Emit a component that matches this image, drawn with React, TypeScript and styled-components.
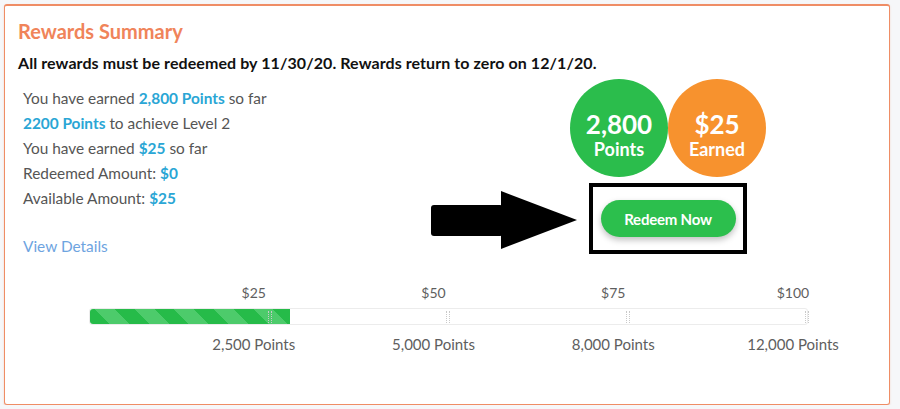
import React from "react";
import styled, { createGlobalStyle } from "styled-components";

const GlobalStyle = createGlobalStyle`
  html, body { margin: 0; padding: 0; }
  body {
    background: #f6f7f9;
    font-family: Lato, "Open Sans", "Liberation Sans", sans-serif;
  }
  * { box-sizing: border-box; }
`;

const Card = styled.section`
  margin: 4px 0 0 4px;
  width: 886px;
  height: 401px;
  background: #ffffff;
  border: 1px solid #ef8d65;
  border-top-width: 2px;
  border-radius: 3px;
  box-shadow: 0 1px 2px rgba(239, 141, 101, 0.35);
  padding: 11px 13px 0 13px;
`;

const Title = styled.h2`
  margin: 0;
  font-size: 20px;
  font-weight: 700;
  color: #f0845a;
  line-height: 28px;
`;

const Notice = styled.p`
  margin: 6px 0 0 0;
  font-size: 16px;
  font-weight: 700;
  letter-spacing: 0.08px;
  color: #111;
  line-height: 24px;
`;

const Main = styled.div`
  display: flex;
  justify-content: space-between;
  margin-top: 6px;
  height: 178px;
`;

const Info = styled.div`
  display: flex;
  flex-direction: column;
  padding-left: 5px;
  padding-top: 5px;
`;

const Line = styled.div`
  font-size: 15.4px;
  line-height: 25px;
  color: #555;
`;

const Hl = styled.span`
  color: #2aa6d5;
  font-weight: 700;
`;

const DetailsLink = styled.a`
  margin-top: 23px;
  font-size: 15.4px;
  line-height: 25px;
  color: #6ea4df;
  text-decoration: none;
`;

const Side = styled.div`
  display: flex;
  flex-direction: column;
  align-items: flex-end;
  margin-right: 110px;
  margin-top: -2px;
`;

const Circles = styled.div`
  display: flex;
  gap: 0;
`;

const Circle = styled.div<{ $bg: string }>`
  width: 98px;
  height: 98px;
  border-radius: 50%;
  background: ${(p) => p.$bg};
  color: #fff;
  display: flex;
  flex-direction: column;
  align-items: center;
  justify-content: center;
  padding-top: 14px;
  font-weight: 700;
`;

const Big = styled.div`
  font-size: 26px;
  line-height: 28px;
`;

const Small = styled.div`
  font-size: 18px;
  line-height: 22px;
`;

const Action = styled.div`
  display: flex;
  align-items: center;
  gap: 12px;
  margin-top: 6px;
  margin-right: 19px;
`;

const Arrow = styled.svg`
  display: block;
  margin-top: 2px;
`;

const Frame = styled.div`
  border: 4px solid #000;
  width: 158px;
  height: 71px;
  display: flex;
  align-items: center;
  justify-content: center;
`;

const RedeemButton = styled.button`
  width: 135px;
  height: 37px;
  border: none;
  border-radius: 19px;
  background: #2cbf4d;
  color: #fff;
  font-family: Lato, "Liberation Sans", sans-serif;
  font-weight: 700;
  font-size: 15px;
  letter-spacing: -0.2px;
  box-shadow: 0 3px 6px rgba(0, 0, 0, 0.25);
  cursor: pointer;
`;

const Progress = styled.div`
  margin: 24px 0 0 71px;
  width: 719px;
`;

const LabelRow = styled.div`
  display: grid;
  grid-template-columns: repeat(4, 1fr);
`;

const LabelCell = styled.div`
  display: flex;
  justify-content: flex-end;
`;

const Label = styled.span<{ $size: number }>`
  width: 100px;
  margin-right: -35px;
  text-align: center;
  font-size: ${(p) => p.$size}px;
  color: #5e5e5e;
  line-height: 20px;
`;

const Track = styled.div`
  position: relative;
  height: 17px;
  margin: 5px 0 9px 0;
  border: 1px solid #ececec;
  border-radius: 3px;
  background: #fff;
`;

const Fill = styled.div`
  height: 100%;
  border-radius: 3px 0 0 3px;
  background: repeating-linear-gradient(
    45deg,
    #26bb49 0px,
    #26bb49 14px,
    #4dcb6b 14px,
    #4dcb6b 28px
  );
`;

const Tick = styled.span`
  position: absolute;
  top: 2px;
  width: 4px;
  height: 12px;
  border-left: 1px dotted #c9c9c9;
  border-right: 1px dotted #c9c9c9;
  transform: translateX(-2px);
`;

const money = ["$25", "$50", "$75", "$100"];
const points = ["2,500 Points", "5,000 Points", "8,000 Points", "12,000 Points"];
const ticks = [180, 358, 538, 717];

export default function App() {
  return (
    <>
      <GlobalStyle />
      <Card>
        <Title>Rewards Summary</Title>
        <Notice>
          All rewards must be redeemed by 11/30/20. Rewards return to zero on 12/1/20.
        </Notice>
        <Main>
          <Info>
            <Line>
              You have earned <Hl>2,800 Points</Hl> so far
            </Line>
            <Line>
              <Hl>2200 Points</Hl> to achieve Level 2
            </Line>
            <Line>
              You have earned <Hl>$25</Hl> so far
            </Line>
            <Line>
              Redeemed Amount: <Hl>$0</Hl>
            </Line>
            <Line>
              Available Amount: <Hl>$25</Hl>
            </Line>
            <DetailsLink href="#">View Details</DetailsLink>
          </Info>
          <Side>
            <Circles>
              <Circle $bg="#2bbd4c">
                <Big>2,800</Big>
                <Small>Points</Small>
              </Circle>
              <Circle $bg="#f7922e">
                <Big>$25</Big>
                <Small>Earned</Small>
              </Circle>
            </Circles>
            <Action>
              <Arrow width="146" height="58" viewBox="0 0 146 58">
                <rect x="0" y="14" width="72" height="31" rx="3" fill="#000" />
                <polygon points="70,0 146,29 70,58" fill="#000" />
              </Arrow>
              <Frame>
                <RedeemButton>Redeem Now</RedeemButton>
              </Frame>
            </Action>
          </Side>
        </Main>
        <Progress>
          <LabelRow>
            {money.map((m) => (
              <LabelCell key={m}>
                <Label $size={14}>{m}</Label>
              </LabelCell>
            ))}
          </LabelRow>
          <Track>
            <Fill style={{ width: "200px" }} />
            {ticks.map((t) => (
              <Tick key={t} style={{ left: `${t}px` }} />
            ))}
          </Track>
          <LabelRow>
            {points.map((p) => (
              <LabelCell key={p}>
                <Label $size={15}>{p}</Label>
              </LabelCell>
            ))}
          </LabelRow>
        </Progress>
      </Card>
    </>
  );
}
